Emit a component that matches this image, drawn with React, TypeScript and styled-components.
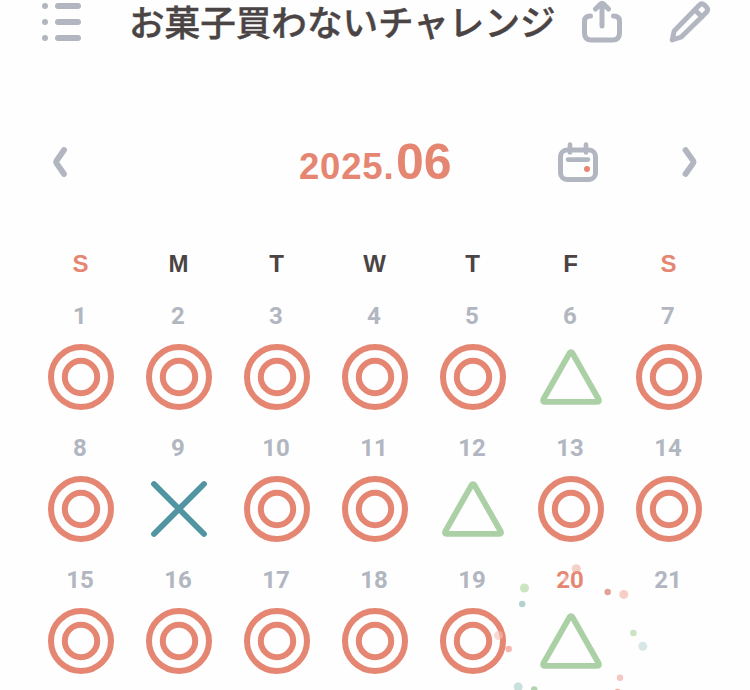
import React from "react";
import styled, { createGlobalStyle } from "styled-components";

const coral = "#e58672";
const gray = "#b1b6c0";
const ink = "#4b4444";
const green = "#abd0a5";
const teal = "#5095a1";

const GlobalStyle = createGlobalStyle`
  *, *::before, *::after { box-sizing: border-box; }
  html, body { margin: 0; background: #fff; overflow: hidden; }
`;

const Screen = styled.main`
  width: 750px;
  height: 690px;
  overflow: hidden;
  display: flex;
  flex-direction: column;
  background: #fefefe;
  font-family: "Liberation Sans", "Noto Sans CJK JP", sans-serif;
  font-kerning: none;
`;

const Header = styled.header`
  height: 46px;
  display: grid;
  grid-template-columns: 129px 431px 1fr;
`;

const Title = styled.h1`
  margin: 0;
  font: 500 35.6px/42px "Noto Sans CJK JP", sans-serif;
  color: ${ink};
  -webkit-text-stroke: 0.4px ${ink};
  white-space: nowrap;
`;

const IconButton = styled.button<{ $left?: number }>`
  display: block;
  border: 0;
  padding: 0;
  margin-left: ${(p) => p.$left ?? 0}px;
  background: none;
  color: ${gray};
  svg { display: block; overflow: visible; }
`;

const Actions = styled.div`
  display: flex;
`;

const MonthBar = styled.nav`
  margin-top: 90px;
  height: 46px;
  display: grid;
  grid-template-columns: 299px 159px 222px 1fr;
`;

const Month = styled.h2`
  margin: 0;
  padding-top: 5px;
  display: flex;
  align-items: baseline;
  font-weight: 700;
  line-height: 46px;
  color: ${coral};
`;

const Year = styled.span`
  font-size: 36.5px;
  letter-spacing: 0.8px;
  width: 97px;
`;

const MonthNumber = styled.span`
  font-size: 50px;
`;

const Weekdays = styled.div`
  margin: 68px 0 0 31.5px;
  height: 32px;
  display: grid;
  grid-template-columns: repeat(7, 98px);
`;

const Weekday = styled.span<{ $weekend: boolean }>`
  text-align: center;
  font: 700 24px/32px "Liberation Sans", sans-serif;
  color: ${(p) => (p.$weekend ? coral : ink)};
`;

const Days = styled.div`
  margin: 20px 0 0 32px;
  display: grid;
  grid-template-columns: repeat(7, 98px);
  grid-auto-rows: 132px;
`;

const Day = styled.div`
  position: relative;
  display: flex;
  flex-direction: column;
  align-items: center;
  svg { display: block; overflow: visible; }
`;

const DayNumber = styled.span<{ $today?: boolean }>`
  height: 44px;
  padding-right: 2px;
  font: 700 24px/32px Roboto, sans-serif;
  font-kerning: none;
  color: ${(p) => (p.$today ? coral : gray)};
`;

const Confetti = styled.svg`
  position: absolute;
  left: -44px;
  top: -4px;
  pointer-events: none;
`;

type Result = "double" | "triangle" | "cross" | "none";

const results: Result[] = [
  "double", "double", "double", "double", "double", "triangle", "double",
  "double", "cross", "double", "double", "triangle", "double", "double",
  "double", "double", "double", "double", "double", "triangle", "none",
];

const dots: [number, number, number, string, number][] = [
  [98.3, 8.8, 4.5, "#ef9f8f", 0.5],
  [85.5, 18, 4, "#fff", 0.35],
  [46.5, 28, 4.5, "#a9d39b", 0.6],
  [44.2, 44, 3.2, "#7fb2b0", 0.6],
  [129.7, 32, 3.2, "#d9796c", 0.7],
  [145.8, 34.4, 4.5, "#ef9f8f", 0.5],
  [155.4, 73, 3.3, "#a9d39b", 0.6],
  [164.8, 86.2, 4.5, "#a8cdcb", 0.45],
  [20.5, 75.5, 4.5, "#f6c0b7", 0.6],
  [30.7, 89, 3.2, "#ef8f80", 0.65],
  [40.2, 127, 4.5, "#92c1bd", 0.5],
  [56.2, 129.4, 3.2, "#8fc28d", 0.7],
  [142, 117.7, 3.2, "#eb9384", 0.5],
  [139.5, 132, 3.2, "#eb9384", 0.7],
];

function Mark({ result }: { result: Result }) {
  if (result === "none") return null;
  return (
    <svg width="66" height="66" viewBox="0 0 66 66" fill="none" strokeLinecap="round" strokeLinejoin="round">
      {result === "double" && (
        <g stroke={coral} strokeWidth="6">
          <circle cx="33" cy="33" r="30" />
          <circle cx="33" cy="33" r="16.2" />
        </g>
      )}
      {result === "triangle" && (
        <path d="M31.5 9.2Q33 7 34.5 9.2L60.6 55.2Q61.8 57.8 59.3 57.8H6.7Q4.2 57.8 5.4 55.2Z" stroke={green} strokeWidth="5.8" />
      )}
      {result === "cross" && <path d="M8 8L58 58M58 8L8 58" stroke={teal} strokeWidth="5.8" />}
    </svg>
  );
}

export default function App() {
  return (
    <>
      <GlobalStyle />
      <Screen>
        <Header>
          <IconButton $left={42} aria-label="Menu">
            <svg width="40" height="44" viewBox="0 0 40 44" fill="none" stroke="currentColor" strokeWidth="6" strokeLinecap="round">
              <path d="M3 6h.01M3 22h.01M3 38h.01M16 6h20M16 22h20M16 38h20" />
            </svg>
          </IconButton>
          <Title>お菓子買わないチャレンジ</Title>
          <Actions>
            <IconButton $left={22} aria-label="Share">
              <svg width="40" height="44" viewBox="0 0 40 44" fill="none" stroke="currentColor" strokeWidth="5" strokeLinecap="round" strokeLinejoin="round">
                <path d="M8.5 16Q2.5 16 2.5 21V33Q2.5 40 9.5 40H30.5Q37.5 40 37.5 33V21Q37.5 16 31.5 16M20 26V6M13.5 9L18 4.5Q20 2.5 22 4.5L26.5 9" />
              </svg>
            </IconButton>
            <IconButton $left={47} aria-label="Edit">
              <svg width="44" height="44" viewBox="0 0 44 44" fill="none" stroke="currentColor" strokeWidth="5" strokeLinecap="round" strokeLinejoin="round">
                <path d="M5.2 31L30 5.5Q32.8 2.6 35.6 5.2L37.2 6.8Q40 9.6 37.2 12.4L12.3 37L3.2 40ZM26 10L33 17" />
              </svg>
            </IconButton>
          </Actions>
        </Header>

        <MonthBar>
          <IconButton $left={52} aria-label="Previous month">
            <svg width="18" height="44" viewBox="0 0 18 44" fill="none" stroke="currentColor" strokeWidth="5.8" strokeLinecap="round" strokeLinejoin="round">
              <path d="M12 10L4.3 21.2Q3.8 22 4.3 22.8L12 34" />
            </svg>
          </IconButton>
          <Month>
            <Year>2025.</Year>
            <MonthNumber>06</MonthNumber>
          </Month>
          <IconButton $left={100} aria-label="Today">
            <svg width="40" height="44" viewBox="0 0 40 44" fill="none" stroke="currentColor" strokeWidth="5" strokeLinecap="round">
              <rect x="2.5" y="10" width="35" height="29.5" rx="6.5" />
              <path d="M12 4.5V12.5M28 4.5V12.5M10 19.6H30" strokeWidth="4.6" />
              <circle cx="29" cy="29" r="3" fill={coral} stroke="none" />
            </svg>
          </IconButton>
          <IconButton aria-label="Next month">
            <svg width="18" height="44" viewBox="0 0 18 44" fill="none" stroke="currentColor" strokeWidth="5.8" strokeLinecap="round" strokeLinejoin="round">
              <path d="M5.5 10L13.4 21.2Q13.9 22 13.4 22.8L5.5 34" />
            </svg>
          </IconButton>
        </MonthBar>

        <Weekdays>
          {["S", "M", "T", "W", "T", "F", "S"].map((d, i) => (
            <Weekday key={i} $weekend={i % 6 === 0}>{d}</Weekday>
          ))}
        </Weekdays>
        <Days>
          {results.map((result, i) => (
            <Day key={i}>
              <DayNumber $today={i === 19}>{i + 1}</DayNumber>
              <Mark result={result} />
              {i === 19 && (
                <Confetti width="180" height="140" viewBox="0 0 180 140">
                  {dots.map(([x, y, r, fill, opacity], n) => (
                    <circle key={n} cx={x} cy={y} r={r} fill={fill} opacity={opacity} />
                  ))}
                </Confetti>
              )}
            </Day>
          ))}
        </Days>
      </Screen>
    </>
  );
}
